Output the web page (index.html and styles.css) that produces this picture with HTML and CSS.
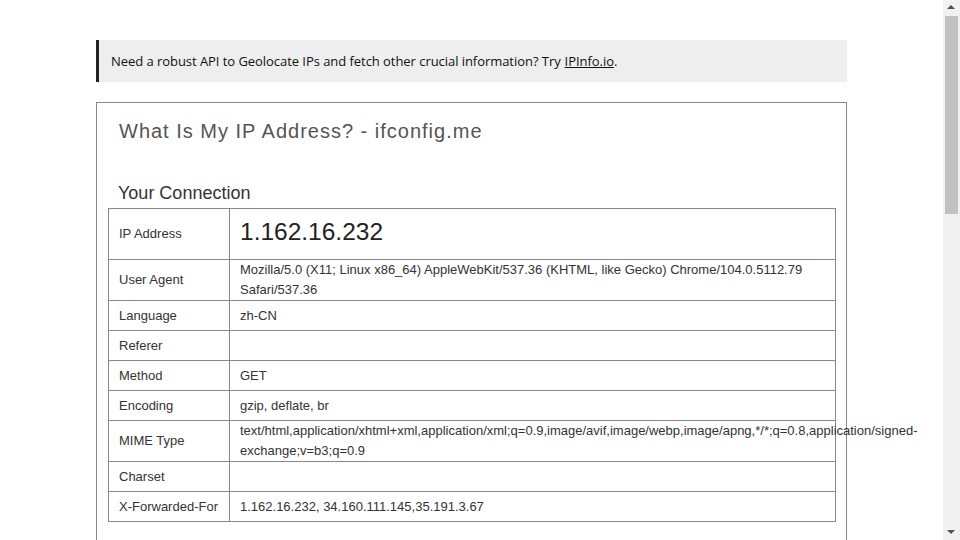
FILE: index.html
```html
<!DOCTYPE html>
<html>
<head>
<meta charset="utf-8">
<title>What Is My IP Address? - ifconfig.me</title>
<link rel="stylesheet" href="styles.css">
</head>
<body>
<div class="page">
  <div class="notice">Need a robust API to Geolocate IPs and fetch other crucial information? Try <a href="#">IPInfo.io</a>.</div>
  <div class="box">
    <h1 class="title">What Is My IP Address? - ifconfig.me</h1>
    <h2 class="subtitle">Your Connection</h2>
    <table class="info">
      <colgroup><col class="col-label"><col></colgroup>
      <tr class="row-ip"><td class="label">IP Address</td><td class="value ip">1.162.16.232</td></tr>
      <tr><td class="label">User Agent</td><td class="value">Mozilla/5.0 (X11; Linux x86_64) AppleWebKit/537.36 (KHTML, like Gecko) Chrome/104.0.5112.79 Safari/537.36</td></tr>
      <tr><td class="label">Language</td><td class="value">zh-CN</td></tr>
      <tr><td class="label">Referer</td><td class="value"></td></tr>
      <tr><td class="label">Method</td><td class="value">GET</td></tr>
      <tr><td class="label">Encoding</td><td class="value">gzip, deflate, br</td></tr>
      <tr><td class="label">MIME Type</td><td class="value">text/html,application/xhtml+xml,application/xml;q=0.9,image/avif,image/webp,image/apng,*/*;q=0.8,application/signed-exchange;v=b3;q=0.9</td></tr>
      <tr><td class="label">Charset</td><td class="value"></td></tr>
      <tr><td class="label">X-Forwarded-For</td><td class="value">1.162.16.232, 34.160.111.145,35.191.3.67</td></tr>
    </table>
  </div>
</div>
<div class="scrollbar">
  <div class="arrow arrow-up"></div>
  <div class="thumb"></div>
  <div class="arrow arrow-down"></div>
</div>
</body>
</html>
```
FILE: styles.css
```css
html {
  overflow: hidden;
}
body {
  margin: 0;
  background: #fff;
  font-family: "Liberation Sans", Arial, sans-serif;
  color: #333;
}
.page {
  width: 751px;
  padding: 40px 0 0 96px;
}
.notice {
  background: #eeeeee;
  border-left: 3px solid #222;
  padding: 0 12px;
  height: 42px;
  display: flex;
  align-items: center;
  font-family: "Open Sans", sans-serif;
  font-size: 13px;
  letter-spacing: -0.05px;
  color: #111;
}
.notice a {
  color: #111;
  text-decoration: underline;
  margin-left: 4px;
}
.box {
  margin-top: 20px;
  border: 1px solid #888;
  padding: 17px 11px 60px 11px;
}
.title {
  margin: 0 0 0 11px;
  font-size: 20px;
  font-weight: normal;
  letter-spacing: 1px;
  color: #555;
  line-height: 23px;
}
.subtitle {
  margin: 40px 0 4px 10px;
  font-size: 18px;
  font-weight: normal;
  color: #333;
  line-height: 21px;
}
.info {
  width: 728px;
  border-collapse: collapse;
  table-layout: fixed;
  font-size: 13px;
}
.col-label {
  width: 121px;
}
.info td {
  border: 1px solid #888;
  padding: 0 10px;
  height: 29px;
  line-height: 20px;
  vertical-align: middle;
}
.info .value {
  overflow: visible;
}
.row-ip td {
  height: 50px;
}
.info .ip {
  font-size: 24.5px;
  color: #222;
  padding-bottom: 5px;
  height: 45px;
}
.scrollbar {
  position: fixed;
  top: 0;
  right: 0;
  width: 17px;
  height: 100%;
  background: #f1f1f1;
}
.thumb {
  position: absolute;
  left: 2px;
  right: 2px;
  top: 16px;
  height: 198px;
  background: #c1c1c1;
}
.arrow {
  position: absolute;
  left: 4px;
  width: 0;
  height: 0;
  border-left: 4px solid transparent;
  border-right: 4px solid transparent;
}
.arrow-up {
  top: 5px;
  border-bottom: 4px solid #505050;
}
.arrow-down {
  bottom: 6px;
  border-top: 4px solid #505050;
}
```
